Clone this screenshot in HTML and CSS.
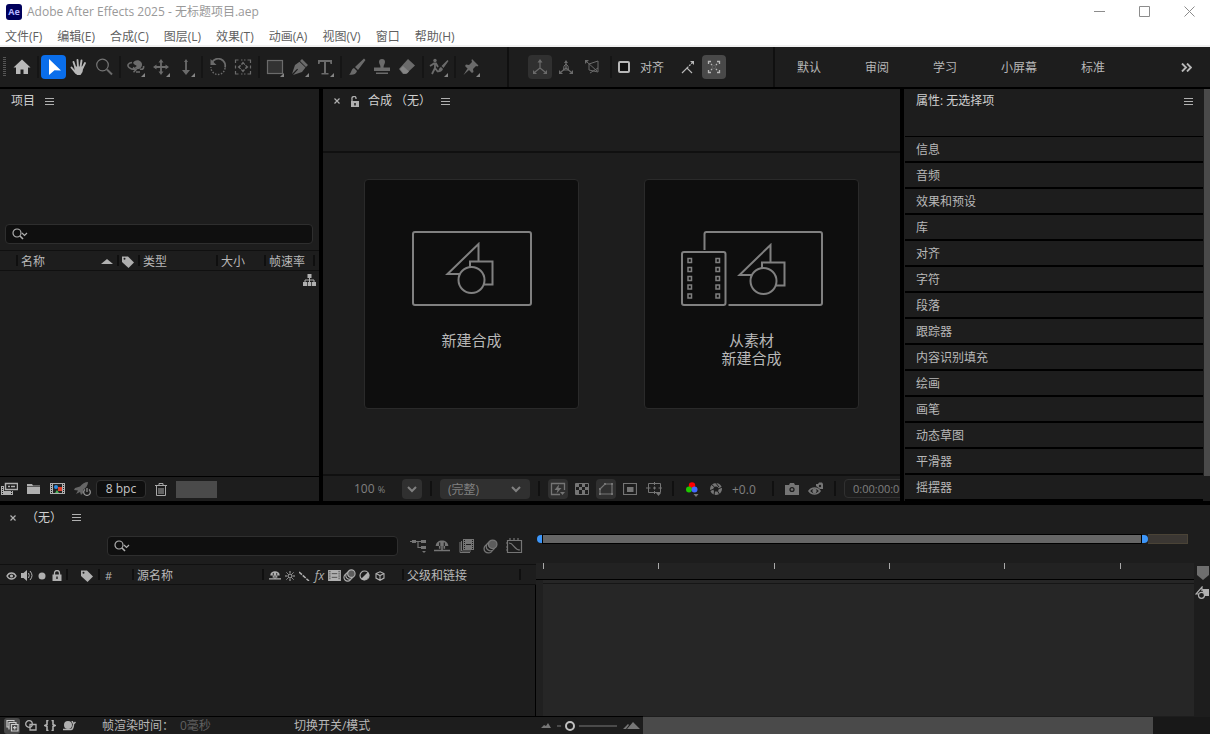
FILE: index.html
```html
<!DOCTYPE html>
<html lang="zh-CN">
<head>
<meta charset="utf-8">
<title>Adobe After Effects 2025 - 无标题项目.aep</title>
<link rel="stylesheet" href="styles.css">
</head>
<body>
<!-- shared icons -->
<svg class="defs" aria-hidden="true">
  <symbol id="i-search" viewBox="0 0 17 12"><g fill="none" stroke="#b0b0b0"><circle cx="5" cy="5" r="4" stroke-width="1.2"/><path d="M8 8l3 3" stroke-width="1.6"/><path d="M10 5l2.500 2.500L15 5" stroke-width="1.200"/></g></symbol>
  <symbol id="i-menu" viewBox="0 0 9 9"><path d="M0 1.500h9M0 4.500h9M0 7.500h9" stroke="#b0b0b0"/></symbol>
  <symbol id="i-tag" viewBox="0 0 12 12"><path d="M0 .5h6l6 6-5.500 5.500L0 6z" fill="#b0b0b0"/><circle cx="2.500" cy="2.800" r="1" fill="#1d1d1d"/></symbol>
  <symbol id="i-down" viewBox="0 0 12 8"><path d="M2 2l4 4 4-4" fill="none" stroke="#808080" stroke-width="2"/></symbol>
  <symbol id="i-shapes" viewBox="0 0 50 52"><g fill="none" stroke="currentColor" stroke-width="2"><path d="M15 32H2.500L33.500 2v17"/><path d="M25 25v-5.500h22.500v23H39"/><circle cx="26.500" cy="38" r="13"/></g></symbol>
  <symbol id="i-film" viewBox="0 0 14 12"><path d="M0 0h14v12H0z" fill="currentColor"/><path d="M2 1v10M12 1v10" stroke="#1d1d1d" stroke-dasharray="1 1"/><path d="M4 4h6M4 8h6" stroke="#1d1d1d" stroke-width=".7"/></symbol>
  <symbol id="i-blur" viewBox="0 0 14 14"><g fill="#1d1d1d" stroke="currentColor" stroke-width="1.200"><circle cx="5" cy="9" r="4"/><circle cx="7" cy="7" r="4"/><circle cx="9" cy="5" r="4" fill="#5c5c5c"/></g></symbol>
  <symbol id="i-shy" viewBox="0 0 14 12"><path d="M1.500 6c0-6.500 11-6.500 11 0z" fill="currentColor"/><path d="M5 3v3M9 3v3" stroke="#1d1d1d"/><path d="M7 2v8M5 6v2.500M9 6v2.500M0 10h14" fill="none" stroke="currentColor" stroke-width="1.400"/></symbol>
</svg>

<header class="titlebar">
  <svg class="app-icon" width="16" height="16" viewBox="0 0 16 16"><rect width="16" height="16" rx="3" fill="#00005b"/><text x="8" y="11" text-anchor="middle" class="app-text">Ae</text></svg>
  <span class="title">Adobe After Effects 2025 - 无标题项目.aep</span>
  <div class="window-buttons">
    <button aria-label="最小化"><svg width="11" height="11"><path d="M0 5.500h11" stroke="#8c8c8c"/></svg></button>
    <button aria-label="最大化"><svg width="11" height="11"><path d="M.5.5h10v10H.5z" stroke="#8c8c8c" fill="none"/></svg></button>
    <button aria-label="关闭"><svg width="11" height="11"><path d="M.5.5l10 10M10.500.5l-10 10" stroke="#8c8c8c"/></svg></button>
  </div>
</header>

<nav class="menubar">
  <a href="#">文件(F)</a><a href="#">编辑(E)</a><a href="#">合成(C)</a><a href="#">图层(L)</a><a href="#">效果(T)</a><a href="#">动画(A)</a><a href="#">视图(V)</a><a href="#">窗口</a><a href="#">帮助(H)</a>
</nav>

<div class="toolbar">
  <div class="tools">
    <span class="grip"></span>
    <button class="tool bright" aria-label="主页"><svg width="18" height="18" viewBox="0 0 18 18"><path d="M9 1.500L.5 9.500H3V16h4.500v-4.500h3V16H15V9.500h2.500z" fill="currentColor"/></svg></button>
    <span class="sep"></span>
    <button class="tool selected" aria-label="选取工具"><svg width="18" height="18" viewBox="0 0 18 18"><path d="M4 1l12 11.500-6.500-.2L4 17z" fill="#fff"/></svg></button>
    <button class="tool bright" aria-label="手形工具"><svg width="18" height="18" viewBox="0 0 18 18"><path d="M6 15L1.500 9.500M5.500 10L3.500 4M8 9L7.500 2M10.500 9L11.500 2.500M12.500 10l2.500-5" fill="none" stroke="currentColor" stroke-width="1.900" stroke-linecap="round"/><path d="M4.500 8.500h9l-1 5.500-2 3H7l-2.500-3z" fill="currentColor"/></svg></button>
    <button class="tool" aria-label="缩放工具"><svg width="18" height="18" viewBox="0 0 18 18"><circle cx="7.500" cy="7" r="5.800" fill="none" stroke="#757575" stroke-width="1.200"/><path d="M12 11.500l5 5" stroke="currentColor" stroke-width="2"/></svg></button>
    <span class="sep"></span>
    <button class="tool more" aria-label="绕光标旋转工具"><svg width="18" height="18" viewBox="0 0 18 18"><path d="M6 5c1-3 6-4 8-1 2 2 1 6-2 7-2 .5-4-.5-4-2 2 0 2-2 0-2z" fill="currentColor"/><path d="M5 4.500C1 5 0 7.500 2 9.500c1.500 1.500 4 2 6 2M13 11c3 1 4-1 3.500-3M6 9.500l3 2.200-2.500 2.500M9 14h4" fill="none" stroke="currentColor" stroke-width="1.600"/></svg></button>
    <button class="tool more" aria-label="平移工具"><svg width="18" height="18" viewBox="0 0 18 18"><path d="M9 4v10M4 9h10" stroke="currentColor" stroke-width="1.800"/><path d="M9 1l2.500 3.500h-5zM9 17l2.500-3.500h-5zM1 9l3.500-2.500v5zM17 9l-3.500-2.500v5z" fill="currentColor"/></svg></button>
    <button class="tool more" aria-label="推拉工具"><svg width="18" height="18" viewBox="0 0 18 18"><path d="M9 3v10" stroke="currentColor" stroke-width="1.800"/><path d="M9 1l2 3H7zM9 17l4-5H5z" fill="currentColor"/></svg></button>
    <span class="sep"></span>
    <button class="tool" aria-label="旋转工具"><svg width="18" height="18" viewBox="0 0 18 18"><path d="M3 4.500a7 7 0 0 1 13 5" fill="none" stroke="currentColor" stroke-width="1.700"/><path d="M1.500 1v6h6z" fill="currentColor"/><path d="M16 10a7 7 0 0 1-14-1" fill="none" stroke="currentColor" stroke-width="1.400" stroke-dasharray="1.500 1.500"/></svg></button>
    <button class="tool" aria-label="锚点工具"><svg width="18" height="18" viewBox="0 0 18 18"><path d="M1.500 5V2h3M13.500 2h3v3M16.500 13v3h-3M4.500 16h-3v-3M7 2h1.500M10 2h1.500M7 16h1.500M10 16h1.500M1.500 7.500v3M16.500 7.500v3" fill="none" stroke="currentColor" stroke-width="1.200"/><circle cx="9" cy="9" r="3" fill="none" stroke="currentColor" stroke-dasharray="2 1"/><path d="M9 3.500l2 2.500H7zM9 14.500L11 12H7zM3.500 9L6 7v4zM14.500 9L12 7v4z" fill="currentColor"/></svg></button>
    <span class="sep"></span>
    <button class="tool more" aria-label="矩形工具"><svg width="18" height="18" viewBox="0 0 18 18"><rect x="1.500" y="2.500" width="15" height="13" fill="#333" stroke="currentColor" stroke-width="1.200"/></svg></button>
    <button class="tool more" aria-label="钢笔工具"><svg width="18" height="18" viewBox="0 0 18 18"><path d="M11 1l6 6-2 2-6-6zM8.500 3.700L14.500 9.500 11 14 2 17l5-5.500-.8-.8L1 16l3-9z" fill="currentColor"/></svg></button>
    <button class="tool more" aria-label="文字工具"><svg width="18" height="18" viewBox="0 0 18 18"><path d="M2 2h14v4h-1.500L14 4h-4v11h2.500v1.500h-7V15H8V4H4l-.5 2H2z" fill="currentColor"/></svg></button>
    <span class="sep"></span>
    <button class="tool" aria-label="画笔工具"><svg width="18" height="18" viewBox="0 0 18 18"><path d="M16 .5L17.500 2 10 12 7 9zM6 10l3 3c-1 4-5 4-8 3.500 2.500-1 2-5.500 5-6.500z" fill="currentColor"/></svg></button>
    <button class="tool" aria-label="仿制图章工具"><svg width="18" height="18" viewBox="0 0 18 18"><path d="M6 4a3 3 0 0 1 6 0c0 2-1.500 3-1.500 5.500H17V13H1V9.500h6.500C7.500 7 6 6 6 4zM3 14.500h12V16H3z" fill="currentColor"/></svg></button>
    <button class="tool" aria-label="橡皮擦工具"><svg width="18" height="18" viewBox="0 0 18 18"><path d="M10 1l7 6.500L8 16H5L1 11z" fill="currentColor"/><path d="M5 8l6 5.500-2 2H5.500L2 11z" fill="#858585"/></svg></button>
    <span class="sep"></span>
    <button class="tool more" aria-label="Roto 笔刷工具"><svg width="20" height="18" viewBox="0 0 20 18"><circle cx="6" cy="2.500" r="1.700" fill="currentColor"/><path d="M1 8l4-2.500h2L9 9M6 5v5l-3 6M6 10l3 4" fill="none" stroke="currentColor" stroke-width="1.800"/><path d="M18.500 2l1 1-5 7-2-2zM12 9l2 2c-1 3-4 3.500-6 3 2-1 1.500-4 4-5z" fill="currentColor"/></svg></button>
    <span class="sep"></span>
    <button class="tool more" aria-label="人偶位置控点工具"><svg width="18" height="18" viewBox="0 0 18 18"><path d="M10 1l6.500 6.500-1.200 1L14 8l-3 3 .5 3-1.500 1-7-7 1-1.500 3 .5 3-3-.5-1.500zM5.500 10.500L7 12l-5.500 5z" fill="currentColor"/></svg></button>
  </div>
  <div class="snapping">
    <button class="box-btn dark" aria-label="本地轴模式"><svg width="16" height="16" viewBox="0 0 16 16"><path d="M8 3v6l-5 4M8 9l5 4" fill="none" stroke="currentColor" stroke-width="1.200"/><path d="M8 0l2.500 3.500h-5zM1 11v4h4zM15 11v4h-4z" fill="currentColor"/></svg></button>
    <button class="box-btn" aria-label="世界轴模式"><svg width="16" height="16" viewBox="0 0 16 16"><path d="M8 3v6l-5 4M8 9l5 4" fill="none" stroke="currentColor" stroke-width="1.200"/><path d="M5.500 11L6 7l2-2 2 2 .5 4z" fill="none" stroke="currentColor"/><path d="M8 1l2 3H6zM1 11v4h4zM15 11v4h-4z" fill="currentColor"/></svg></button>
    <button class="box-btn" aria-label="视图轴模式"><svg width="16" height="16" viewBox="0 0 16 16"><path d="M5 5l9-3v11L5 11zM3 3l10 9M14 9l-8 5" fill="none" stroke="currentColor"/><path d="M1 1h4L1 5z" fill="currentColor"/></svg></button>
    <span class="sep wide"></span>
    <input type="checkbox" id="snap" class="snap-check"><label for="snap">对齐</label>
    <button class="box-btn light" aria-label="对齐边缘"><svg width="16" height="16" viewBox="0 0 16 16"><path d="M2 14l5-5 5 5" fill="none" stroke="currentColor" stroke-width="1.200"/><path d="M7 9l5-5" stroke="currentColor" stroke-width="1.200" stroke-dasharray="2 1"/><path d="M10 2h4v4z" fill="currentColor"/></svg></button>
    <button class="box-btn active" aria-label="对齐特征"><svg width="16" height="16" viewBox="0 0 16 16"><g fill="none" stroke="currentColor" stroke-width="1.300"><path d="M2.500 5V2.500H5M11 2.500h2.500V5M13.500 11v2.500H11M5 13.500H2.500V11"/><path d="M5 5l2 2M11 5L9 7M5 11l2-2M11 11L9 9" stroke-dasharray="1.500 1"/></g></svg></button>
  </div>
  <nav class="workspaces">
    <a href="#">默认</a><a href="#">审阅</a><a href="#">学习</a><a href="#">小屏幕</a><a href="#">标准</a>
    <button class="overflow" aria-label="更多工作区"><svg width="11" height="9" viewBox="0 0 11 9"><path d="M1 .5l4 4-4 4M6 .5l4 4-4 4" fill="none" stroke="#b8b8b8" stroke-width="1.900"/></svg></button>
  </nav>
</div>

<main class="panels">
  <section class="panel project">
    <div class="tab">
      <h2>项目</h2>
      <button aria-label="面板菜单"><svg width="9" height="9"><use href="#i-menu"/></svg></button>
    </div>
    <div class="search project-search">
      <svg width="17" height="12"><use href="#i-search"/></svg>
      <input type="text" aria-label="搜索项目">
    </div>
    <table class="columns">
      <colgroup><col class="c-edge"><col class="c-name"><col class="c-tag"><col class="c-type"><col class="c-size"><col class="c-rate"><col></colgroup>
      <thead><tr>
        <th></th>
        <th><span class="sorted">名称<svg width="12" height="5"><path d="M0 5l6-5 6 5z" fill="#b0b0b0"/></svg></span></th>
        <th><svg width="12" height="12"><use href="#i-tag"/></svg></th>
        <th>类型</th><th>大小</th><th>帧速率</th><th></th>
      </tr></thead>
    </table>
    <div class="project-list">
      <button aria-label="项目流程图"><svg width="13" height="12" viewBox="0 0 13 12"><path d="M4.500 0h4v4h-4zM0 8h4v4H0zM4.700 8h3.600v4H4.700zM9 8h4v4H9z" fill="#b0b0b0"/><path d="M6.500 4v4M2 8V6h9v2" fill="none" stroke="#b0b0b0"/></svg></button>
    </div>
    <div class="project-footer">
      <button aria-label="解释素材"><svg width="18" height="14" viewBox="0 0 18 14"><path d="M5.500 1.500h12v6h-12z" fill="none" stroke="#b0b0b0" stroke-width="1.500"/><path d="M8 4.500h2M11 4.500h4" stroke="#b0b0b0" stroke-width="1.500"/><path d="M1 4h3v5h9v4H1z" fill="#b0b0b0"/><path d="M2.500 5v7M11.500 9v3" stroke="#1d1d1d" stroke-dasharray="1 1"/></svg></button>
      <button aria-label="新建文件夹"><svg width="14" height="12" viewBox="0 0 14 12"><path d="M0 1h5l1 1.500h7V11H0z" fill="#b0b0b0"/><path d="M0 3.500h13" stroke="#1d1d1d" stroke-width=".6"/></svg></button>
      <button aria-label="新建合成"><svg width="15" height="12" viewBox="0 0 15 12"><path d="M0 0h15v11H0z" fill="#b0b0b0"/><path d="M1.500 1v10M13.500 1v10" stroke="#1d1d1d" stroke-dasharray="1 1"/><path d="M3 1h9v9H3z" fill="#222"/><circle cx="6" cy="4" r="2" fill="#2f8be0"/><path d="M8 4h4v4H8z" fill="#e0402c"/><path d="M5 10l2-3 2 3z" fill="#4db35c"/></svg></button>
      <button aria-label="项目设置"><svg width="17" height="14" viewBox="0 0 17 14"><path d="M14 0c-3 0-6 2-8 4.500L1 6l-1 2 4 .5L2 12l4-2 1 3 2-2V8c3-2 5-5 5-8z" fill="#666"/><path d="M11 7.500a3.300 3.300 0 1 0 4 0M13 6v4" fill="none" stroke="#999" stroke-width="1.200"/></svg></button>
      <button class="depth">8 bpc</button>
      <button aria-label="删除"><svg width="12" height="13" viewBox="0 0 12 13"><path d="M0 2.500h12M4 2V.5h4V2M1.500 3v9.500h9V3M4 5v6M6 5v6M8 5v6" fill="none" stroke="#a8a8a8"/></svg></button>
      <span class="h-thumb"></span>
    </div>
  </section>

  <section class="panel comp">
    <div class="tab comp-tab">
      <button class="close" aria-label="关闭"><svg width="6" height="6"><path d="M.5.5l5 5M5.500.5l-5 5" stroke="#b0b0b0" stroke-width="1.200"/></svg></button>
      <svg width="10" height="11" viewBox="0 0 10 11"><path d="M1 5h8v6H1z" fill="#b0b0b0"/><path d="M2 5V3a2 2 0 0 1 4-1v1" fill="none" stroke="#b0b0b0" stroke-width="1.300"/><path d="M5 7v2.500" stroke="#1d1d1d" stroke-width="1.500"/></svg>
      <h2>合成 （无）</h2>
      <button aria-label="面板菜单"><svg width="9" height="9"><use href="#i-menu"/></svg></button>
    </div>
    <div class="cards">
      <button class="card">
        <svg width="120" height="76" viewBox="0 0 120 76"><rect x="1" y="1" width="118" height="73" rx="2" fill="none" stroke="#808080" stroke-width="2"/><use href="#i-shapes" x="33" y="11" width="50" height="52"/></svg>
        <span>新建合成</span>
      </button>
      <button class="card">
        <svg width="142" height="76" viewBox="0 0 142 76"><g fill="none" stroke="#808080" stroke-width="2"><path d="M23.500 19V3a2 2 0 0 1 2-2H139a2 2 0 0 1 2 2v69a2 2 0 0 1-2 2H47.500"/><rect x="1" y="21" width="43.500" height="53" rx="2"/></g><g fill="none" stroke="#808080" stroke-width="1.500"><path d="M7 27.500h3.500v4H7zM7 36.500h3.500v4H7zM7 45.500h3.500v4H7zM7 54h3.500v4H7zM7 63h3.500v4H7zM35 27.500h3.500v4H35zM35 36.500h3.500v4H35zM35 45.500h3.500v4H35zM35 54h3.500v4H35zM35 63h3.500v4H35z"/></g><use href="#i-shapes" x="56" y="12" width="50" height="52"/></svg>
        <span>从素材<br>新建合成</span>
      </button>
    </div>
    <div class="viewer-bar">
      <span class="zoom">100 <small>%</small></span>
      <button class="drop" aria-label="放大率"><svg width="12" height="8"><use href="#i-down"/></svg></button>
      <i class="vsep"></i>
      <span class="select-wrap"><select aria-label="分辨率"><option>(完整)</option></select><svg width="12" height="8"><use href="#i-down"/></svg></span>
      <i class="vsep"></i>
      <div class="view-icons">
        <button class="on" aria-label="快速预览"><svg width="16" height="14" viewBox="0 0 16 14"><path d="M10 12.500H1.500v-11h13V8" fill="none" stroke="currentColor" stroke-width="1.300"/><path d="M9 2.500L4.500 8h3l-1 3.500L11.500 6h-3z" fill="currentColor"/><path d="M10 10h5l-2.500 3z" fill="currentColor"/></svg></button>
        <button aria-label="透明网格"><svg width="14" height="12" viewBox="0 0 14 12"><path d="M.5.5h13v11H.5z" fill="none" stroke="currentColor"/><path d="M1 1h3v3H1zM7 1h3v3H7zM4 4h3v3H4zM10 4h3v3h-3zM1 7h3v4H1zM7 7h3v4H7z" fill="currentColor"/></svg></button>
        <button class="on" aria-label="蒙版可见性"><svg width="16" height="14" viewBox="0 0 16 14"><path d="M2 12V7l5-5h7v10z" fill="none" stroke="currentColor" stroke-width="1.200"/><path d="M1 11h2v2H1zM13 11h2v2h-2zM13 1h2v2h-2zM6 1h2v2H6zM1 6h2v2H1z" fill="currentColor"/></svg></button>
        <button aria-label="目标区域"><svg width="14" height="12" viewBox="0 0 14 12"><path d="M.5.5h13v11H.5z" fill="none" stroke="currentColor" stroke-width="1.200"/><path d="M4 4h6.500v5H4z" fill="currentColor"/></svg></button>
        <button aria-label="网格和参考线"><svg width="16" height="14" viewBox="0 0 16 14"><path d="M2.500 1.500h12v9h-12zM8.500 0v3M8.500 9v3M0 6h4.500M12.500 6H16M7 6h3M8.500 4.500v3" fill="none" stroke="currentColor"/><path d="M10 11h5l-2.500 3z" fill="currentColor"/></svg></button>
      </div>
      <i class="vsep"></i>
      <div class="view-icons">
        <button aria-label="通道"><svg width="14" height="16" viewBox="0 0 14 16"><circle cx="7" cy="4.500" r="3.200" fill="#f00"/><circle cx="4" cy="8.500" r="3" fill="#1ec800"/><circle cx="9.500" cy="8.500" r="3" fill="#4169ff"/><path d="M8.500 13h5L11 16z" fill="currentColor"/></svg></button>
        <button aria-label="重置曝光度"><svg width="14" height="14" viewBox="0 0 14 14"><circle cx="7" cy="7" r="4.300" fill="none" stroke="currentColor" stroke-width="3.400"/><path d="M6 0l4 5M13.500 5L9 7M11 13L8.500 9M5 13.500L5.500 9M0 9l5-2M2 2l3.500 3" stroke="#1d1d1d"/></svg></button>
      </div>
      <span class="exposure">+0.0</span>
      <i class="vsep"></i>
      <div class="view-icons">
        <button aria-label="拍摄快照"><svg width="14" height="12" viewBox="0 0 14 12"><path d="M0 2h4l1-2h4l1 2h4v10H0z" fill="currentColor"/><circle cx="7" cy="6.500" r="2.600" fill="#1d1d1d"/><circle cx="7" cy="6.500" r="1.300" fill="currentColor"/></svg></button>
        <button aria-label="显示快照"><svg width="16" height="14" viewBox="0 0 16 14"><path d="M1 9c3-4 8-4 11 0-3 4-8 4-11 0z" fill="none" stroke="currentColor" stroke-width="1.600"/><circle cx="6.500" cy="9" r="2.200" fill="currentColor"/><path d="M8 2h2l1-1.500h3L15 2v5h-3L8 4z" fill="currentColor"/><circle cx="12" cy="4" r="1.200" fill="#1d1d1d"/></svg></button>
      </div>
      <i class="vsep"></i>
      <button class="timecode">0:00:00:00</button>
    </div>
  </section>

  <aside class="panel side">
    <div class="side-scroll">
      <div class="side-head">
        <h2>属性: 无选择项</h2>
        <button aria-label="面板菜单"><svg width="9" height="9"><use href="#i-menu"/></svg></button>
      </div>
      <ul class="side-list">
        <li><a href="#">信息</a></li>
        <li><a href="#">音频</a></li>
        <li><a href="#">效果和预设</a></li>
        <li><a href="#">库</a></li>
        <li><a href="#">对齐</a></li>
        <li><a href="#">字符</a></li>
        <li><a href="#">段落</a></li>
        <li><a href="#">跟踪器</a></li>
        <li><a href="#">内容识别填充</a></li>
        <li><a href="#">绘画</a></li>
        <li><a href="#">画笔</a></li>
        <li><a href="#">动态草图</a></li>
        <li><a href="#">平滑器</a></li>
        <li><a href="#">摇摆器</a></li>
      </ul>
    </div>
    <div class="v-track"><span class="v-thumb"></span></div>
  </aside>
</main>

<section class="timeline">
  <div class="tab time-tab">
    <button class="close" aria-label="关闭"><svg width="6" height="6"><path d="M.5.5l5 5M5.500.5l-5 5" stroke="#b0b0b0" stroke-width="1.200"/></svg></button>
    <h2>（无）</h2>
    <button aria-label="面板菜单"><svg width="9" height="9"><use href="#i-menu"/></svg></button>
  </div>
  <div class="time-body">
    <div class="layers">
      <div class="layer-tools">
        <div class="search">
          <svg width="17" height="12"><use href="#i-search"/></svg>
          <input type="text" aria-label="搜索图层">
        </div>
        <div class="layer-icons">
          <button aria-label="合成微型流程图"><svg width="17" height="14" viewBox="0 0 17 14"><path d="M0 2.500h11M8 2.500v6h4" fill="none" stroke="currentColor" stroke-width="1.200"/><path d="M2 1h4v3H2zM11 1h5v3h-5zM11 7h5v3h-5zM12 12h4l-2 2z" fill="currentColor"/></svg></button>
          <button aria-label="隐藏图层"><svg width="16" height="14"><use href="#i-shy"/></svg></button>
          <button aria-label="帧混合"><svg width="15" height="14" viewBox="0 0 15 14"><path d="M4 0h11v11H4z" fill="currentColor"/><path d="M1 3v10.500h10M2.500 2v10H12" fill="none" stroke="currentColor"/><path d="M5.500 1v9M13.500 1v9" stroke="#1d1d1d" stroke-dasharray="1 1"/><path d="M7 5.500h5" stroke="#1d1d1d"/></svg></button>
          <button aria-label="运动模糊"><svg width="15" height="15"><use href="#i-blur"/></svg></button>
          <button aria-label="图表编辑器"><svg width="17" height="16" viewBox="0 0 17 16"><path d="M1.500 2.500h14v12h-14zM4 0v2M8 0v2M12 0v2M0 5h2M0 9h2M0 12h2M3 5c5 0 5 7 11 7" fill="none" stroke="currentColor" stroke-width="1.200"/></svg></button>
        </div>
      </div>
      <table class="columns">
        <colgroup><col class="l-av"><col class="l-tag"><col class="l-num"><col class="l-source"><col class="l-switch"><col class="l-parent"><col></colgroup>
        <thead><tr>
          <th><span class="switches">
            <svg width="11" height="10" viewBox="0 0 11 10"><path d="M1 5c2-4 7-4 9 0-2 4-7 4-9 0z" fill="none" stroke="#b0b0b0" stroke-width="1.400"/><circle cx="5.500" cy="5" r="1.600" fill="#b0b0b0"/></svg>
            <svg width="12" height="11" viewBox="0 0 12 11"><path d="M0 3h2.500L6 0v11L2.500 8H0z" fill="#b0b0b0"/><path d="M7.500 3q1.500 2.500 0 5M9 1q4 4.500 0 9" fill="none" stroke="#b0b0b0"/></svg>
            <svg width="8" height="8"><circle cx="4" cy="4" r="3.500" fill="#b0b0b0"/></svg>
            <svg width="10" height="11" viewBox="0 0 10 11"><path d="M.5 4.500h9V11h-9z" fill="#b0b0b0"/><path d="M2.500 5V3a2.500 2.500 0 0 1 5 0v2" fill="none" stroke="#b0b0b0" stroke-width="1.300"/><path d="M5 6.500V9" stroke="#1d1d1d" stroke-width="1.400"/></svg>
          </span></th>
          <th class="tag-cell"><svg width="12" height="12"><use href="#i-tag"/></svg></th>
          <th class="num">#</th>
          <th>源名称</th>
          <th><span class="switches">
            <svg width="12" height="11"><use href="#i-shy"/></svg>
            <svg width="10" height="10" viewBox="0 0 10 10"><circle cx="5" cy="5" r="2" fill="none" stroke="#b0b0b0"/><path d="M5 0v2M5 8v2M0 5h2M8 5h2M1.500 1.500l1.200 1.200M7.300 7.300l1.200 1.200M8.500 1.500L7.300 2.700M2.700 7.300L1.500 8.500" stroke="#b0b0b0"/></svg>
            <svg width="11" height="10" viewBox="0 0 11 10"><path d="M0 1l10 9" stroke="#b0b0b0" stroke-width="1.500" stroke-dasharray="4 1"/></svg>
            <em class="fx">fx</em>
            <svg width="13" height="11"><use href="#i-film"/></svg>
            <svg width="13" height="13"><use href="#i-blur"/></svg>
            <svg width="11" height="11" viewBox="0 0 11 11"><circle cx="5.500" cy="5.500" r="4.500" fill="none" stroke="#b0b0b0" stroke-width="1.200"/><path d="M9 2A5 5 0 0 1 2 9z" fill="#b0b0b0"/></svg>
            <svg width="10" height="10" viewBox="0 0 10 10"><path d="M5 .8l4 1.800v4.500L5 9.300 1 7.100V2.600zM1 2.600l4 2 4-2M5 4.600v4.700" fill="none" stroke="#b0b0b0" stroke-width="1.100"/></svg>
          </span></th>
          <th>父级和链接</th>
          <th></th>
        </tr></thead>
      </table>
      <div class="layer-list"></div>
      <div class="layer-footer">
        <div class="pane-toggles">
          <button class="on" aria-label="图层开关窗格"><svg width="13" height="13" viewBox="0 0 13 13"><path d="M8 2.500V1.500H1V8h1.500M3.500 10H3V3.500h7V5" fill="none" stroke="#ccc" stroke-width="1.200"/><path d="M5.500 5.500h6.500V12H5.500zM8.700 7v3.500M7 8.700h3.500" fill="none" stroke="#ccc" stroke-width="1.200"/></svg></button>
          <button aria-label="转换控制窗格"><svg width="12" height="11" viewBox="0 0 12 11"><circle cx="4" cy="4" r="3.300" fill="none" stroke="#b0b0b0" stroke-width="1.300"/><path d="M5 4.500h6V10H5z" fill="none" stroke="#b0b0b0" stroke-width="1.300"/></svg></button>
          <button aria-label="入点出点窗格"><svg width="12" height="11" viewBox="0 0 12 11"><path d="M4.500.5H3v4L1 5.500l2 1v4h1.500M7.500.5H9v4l2 1-2 1v4H7.500" fill="none" stroke="#b0b0b0" stroke-width="1.600"/></svg></button>
          <button aria-label="渲染时间窗格"><svg width="13" height="10" viewBox="0 0 13 10"><circle cx="5" cy="4" r="4" fill="#b0b0b0"/><path d="M0 8.500h8c2 0 2-2 2.500-5M9 0l1.500 3L12.500 1" fill="none" stroke="#b0b0b0" stroke-width="1.500"/></svg></button>
        </div>
        <span class="render">帧渲染时间：</span>
        <span class="render-ms">0毫秒</span>
        <button class="toggle-mode">切换开关/模式</button>
      </div>
    </div>

    <div class="track">
      <div class="track-top">
        <div class="track-main">
          <div class="work-area">
            <span class="handle start"></span><span class="range"></span><span class="handle end"></span><span class="tail"></span>
          </div>
          <div class="navigator"></div>
          <div class="ruler"><i></i><i></i><i></i><i></i><i></i><i></i></div>
          <div class="lanes"></div>
        </div>
        <div class="track-side">
          <button aria-label="合成标记"><svg width="12" height="14"><path d="M0 0h12v9l-6 5-6-5z" fill="#6e6e6e"/></svg></button>
          <button aria-label="合成按钮"><svg width="14" height="13" viewBox="0 0 14 13"><path d="M7 3h7v7H9z" fill="#b0b0b0"/><path d="M4 8H1l6-7v4" fill="none" stroke="#b0b0b0" stroke-width="1.200"/><circle cx="6.500" cy="9.300" r="3" fill="#1d1d1d" stroke="#b0b0b0" stroke-width="1.200"/></svg></button>
        </div>
      </div>
      <div class="track-footer">
        <div class="time-zoom">
          <svg width="10" height="5"><path d="M0 5l3-3 2 1 2-3 3 5z" fill="#777"/></svg>
          <input type="range" min="0" max="100" value="16" aria-label="时间缩放">
          <svg width="17" height="7"><path d="M0 7l5-5 1 1-3 4zM4 7l6-7 7 7z" fill="#777"/></svg>
        </div>
        <div class="h-track"><span></span></div>
      </div>
    </div>
  </div>
</section>
</body>
</html>
```
FILE: styles.css
```css
* {
  box-sizing: border-box;
}

body {
  margin: 0;
  height: 100vh;
  display: flex;
  flex-direction: column;
  overflow: hidden;
  background: #000;
  color: #b8b8b8;
  font-family: "Open Sans", "Noto Sans CJK SC", sans-serif;
  font-size: 12px;
  line-height: 16px;
}

button {
  display: flex;
  align-items: center;
  justify-content: center;
  margin: 0;
  padding: 0;
  border: none;
  background: none;
  color: inherit;
  font: inherit;
  cursor: pointer;
}

a {
  color: inherit;
  text-decoration: none;
}

h2 {
  margin: 0;
  font-size: 12px;
  font-weight: normal;
  color: #d0d0d0;
}

svg {
  display: block;
  flex: none;
}

.defs {
  position: absolute;
  width: 0;
  height: 0;
}

/* title and menu */
.titlebar {
  display: flex;
  align-items: center;
  height: 23px;
  padding: 0 15px 0 6px;
  background: #fff;
  color: #999;
}

.title {
  margin-left: 5px;
}

.app-text {
  font: bold 9px "Open Sans", sans-serif;
  fill: #b4b4ff;
}

.window-buttons {
  display: flex;
  gap: 34px;
  margin-left: auto;
}

.menubar {
  display: flex;
  gap: 15px;
  height: 24px;
  padding: 6px 5px 0;
  background: #fff;
  border-bottom: 2px solid #f0f0f0;
  color: #5f5f5f;
}

/* toolbar */
.toolbar {
  display: flex;
  flex: none;
  height: 40px;
  margin-bottom: 2px;
  background: #1d1d1d;
}

.tools,
.snapping,
.workspaces {
  display: flex;
  align-items: center;
}

.tools {
  padding: 0 24px 0 3px;
}

.grip {
  width: 3px;
  height: 20px;
  margin-right: 3px;
  background: repeating-linear-gradient(#555 0 1px, #1d1d1d 1px 2px);
}

.sep {
  width: 7px;
  height: 22px;
  background: linear-gradient(#151515, #151515) no-repeat center / 2px 100%;
}

.sep.wide {
  width: 10px;
}

.tool {
  position: relative;
  width: 25px;
  height: 24px;
  color: #6b6b6b;
}

.tool.bright {
  color: #b8b8b8;
}

.tool.selected {
  border-radius: 4px;
  background: #0a6eeb;
}

.tool.more::after {
  content: "";
  position: absolute;
  right: 3px;
  bottom: 2px;
  border-left: 4px solid transparent;
  border-bottom: 4px solid #858585;
}

.snapping {
  gap: 2px;
  padding: 0 47px 0 19px;
  border-left: 2px solid #101010;
  border-right: 2px solid #101010;
}

.box-btn {
  width: 24px;
  height: 24px;
  border-radius: 4px;
  color: #6b6b6b;
}

.box-btn.dark {
  background: #303030;
}

.box-btn.light {
  color: #b8b8b8;
}

.box-btn.active {
  background: #494949;
  color: #b8b8b8;
}

.snap-check {
  appearance: none;
  width: 12px;
  height: 12px;
  margin: 0;
  border: 2px solid #b8b8b8;
  border-radius: 2px;
  background: #111;
}

.snapping label {
  margin: 0 10px 0 8px;
}

.snapping label,
.workspaces a {
  padding-top: 2px;
}

.workspaces {
  flex: 1;
  gap: 44px;
  padding: 0 18px 0 22px;
}

.overflow {
  margin-left: auto;
}

/* panels */
.panels {
  display: grid;
  grid-template-columns: minmax(0, 319fr) minmax(0, 577fr) minmax(0, 306fr);
  gap: 4px;
  flex: 412;
  min-height: 0;
}

.panel {
  display: flex;
  flex-direction: column;
  min-height: 0;
  overflow: hidden;
  background: #1d1d1d;
}

.tab {
  display: flex;
  align-items: center;
  gap: 10px;
  height: 24px;
  padding: 0 11px;
}

.search {
  display: flex;
  align-items: center;
  height: 20px;
  padding: 0 6px;
  border: 1px solid #2e2e2e;
  border-radius: 4px;
  background: #0f0f0f;
}

.search input {
  flex: 1;
  min-width: 0;
  height: 16px;
  padding: 0 4px;
  border: none;
  outline: none;
  background: none;
  color: #d0d0d0;
}

.project-search {
  margin: 111px 6px 6px 5px;
}

.columns {
  width: 100%;
  table-layout: fixed;
  border-collapse: collapse;
  border-top: 1px solid #101010;
  border-bottom: 1px solid #101010;
}

.columns th {
  height: 19px;
  padding: 2px 0 0 5px;
  font-weight: normal;
  line-height: 17px;
  text-align: left;
  white-space: nowrap;
  background: linear-gradient(#0f0f0f, #0f0f0f) no-repeat left center / 2px 11px;
}

.columns th:first-child {
  padding-left: 4px;
  background: none;
}

.c-edge { width: 16px; }
.c-name { width: 101px; }
.c-tag { width: 21px; }
.c-type { width: 78px; }
.c-size { width: 48px; }
.c-rate { width: 49px; }

.sorted {
  display: flex;
  align-items: center;
  justify-content: space-between;
  padding-right: 4px;
}

.project-list {
  display: flex;
  flex: 1;
  align-items: flex-start;
  justify-content: flex-end;
  padding: 3px 3px 0 0;
}

.project-footer {
  display: flex;
  align-items: center;
  gap: 9px;
  height: 25px;
  border-top: 1px solid #000;
}

.depth {
  width: 50px;
  height: 18px;
  margin-left: -4px;
  border: 1px solid #303030;
  border-radius: 4px;
  background: #0f0f0f;
  color: #c8c8c8;
}

.h-thumb {
  width: 41px;
  height: 17px;
  background: #4a4a4a;
}

/* composition */
.comp-tab {
  height: 64px;
  padding-bottom: 38px;
  border-bottom: 2px solid #101010;
}

.comp-tab h2 {
  margin-left: -2px;
}

.cards {
  display: flex;
  flex: 1;
  align-items: flex-start;
  justify-content: center;
  gap: 65px;
  padding-top: 26px;
}

.card {
  flex-direction: column;
  justify-content: flex-start;
  gap: 24px;
  width: 215px;
  height: 230px;
  padding-top: 51px;
  border: 1px solid #2a2a2a;
  border-radius: 4px;
  background: #0e0e0e;
  color: #b8b8b8;
  font-size: 15px;
  line-height: 18px;
}

.card svg {
  color: #808080;
}

.viewer-bar {
  display: flex;
  align-items: center;
  height: 27px;
  padding-left: 31px;
  border-top: 2px solid #101010;
  color: #808080;
  white-space: nowrap;
}

.viewer-bar > * {
  flex: none;
}

.zoom {
  width: 48px;
  padding-top: 2px;
}

.zoom small {
  font-size: 9px;
}

.drop {
  width: 20px;
  height: 20px;
  border-radius: 4px;
  background: #303030;
}

.vsep {
  width: 2px;
  height: 15px;
  margin: 0 8px;
  background: #101010;
}

.select-wrap {
  display: flex;
  align-items: center;
  width: 90px;
  height: 20px;
  padding-right: 8px;
  border-radius: 4px;
  background: #303030;
}

.select-wrap select {
  appearance: none;
  flex: 1;
  min-width: 0;
  padding: 2px 8px 0;
  border: none;
  background: none;
  color: #808080;
  font: inherit;
}

.view-icons {
  display: flex;
  gap: 4px;
}

.view-icons button {
  width: 20px;
  height: 20px;
  border-radius: 4px;
  color: #757575;
}

.view-icons .on {
  background: #303030;
}

.exposure {
  width: 38px;
  padding: 2px 0 0 6px;
}

.timecode {
  height: 19px;
  padding: 1px 8px 0;
  border: 1px solid #303030;
  border-radius: 4px;
  font-size: 11px;
}

/* right hand panel list */
.side {
  flex-direction: row;
}

.side-scroll {
  flex: 1;
  padding-left: 1px;
  overflow: hidden;
}

.side-head {
  display: flex;
  align-items: center;
  justify-content: space-between;
  height: 48px;
  padding: 0 10px 23px 11px;
  border-bottom: 1px solid #000;
}

.side-list {
  margin: 0;
  padding: 0;
  list-style: none;
}

.side-list li {
  height: 26px;
  padding: 5px 11px 0;
  border-bottom: 2px solid #000;
}

.v-track {
  width: 7px;
  padding-left: 1px;
}

.v-thumb {
  display: block;
  height: 94%;
  background: #4a4a4a;
}

/* timeline */
.timeline {
  display: flex;
  flex: 229;
  flex-direction: column;
  min-height: 0;
  margin-top: 4px;
  background: #1d1d1d;
}

.time-tab {
  flex: none;
  height: 25px;
  padding-left: 10px;
}

.time-body {
  display: grid;
  grid-template-columns: minmax(0, 536fr) minmax(0, 674fr);
  flex: 1;
  min-height: 0;
}

.layers,
.track {
  display: flex;
  flex-direction: column;
  min-height: 0;
}

.layer-tools {
  display: flex;
  align-items: center;
  height: 34px;
  padding: 0 12px 2px 20%;
}

.layer-tools .search {
  flex: 1;
}

.layer-icons {
  display: flex;
  gap: 4px;
  margin-left: 10px;
  color: #757575;
}

.layer-icons button {
  width: 20px;
  height: 20px;
}

.l-av { width: 66px; }
.l-tag { width: 32px; }
.l-num { width: 34px; }
.l-source { width: 130px; }
.l-switch { width: 140px; }
.l-parent { width: 117px; }

.switches {
  display: grid;
  grid-auto-flow: column;
  grid-auto-columns: 15px;
  justify-content: start;
  align-items: center;
  justify-items: center;
  color: #b0b0b0;
}

.columns .tag-cell {
  padding-left: 15px;
}

.columns .num {
  padding-left: 7px;
  font-size: 11px;
}

.fx {
  font-size: 12px;
  line-height: 14px;
}

.layer-list {
  flex: 1;
  border-right: 1px solid #000;
}

.layer-footer {
  display: flex;
  align-items: center;
  height: 18px;
  padding-left: 4px;
  border-top: 1px solid #000;
}

.pane-toggles {
  display: flex;
  gap: 3px;
  width: 98px;
}

.pane-toggles button {
  width: 16px;
  height: 16px;
  border-radius: 3px;
}

.pane-toggles .on {
  background: #494949;
}

.render {
  width: 78px;
}

.render-ms {
  color: #606060;
}

.toggle-mode {
  margin: 0 auto 0 83px;
}

.track-top {
  display: flex;
  flex: 1;
  min-height: 0;
}

.track-main {
  display: flex;
  flex: 1;
  flex-direction: column;
}

.work-area {
  display: flex;
  height: 10px;
  margin: 4px 6px 0 1px;
}

.handle {
  width: 6px;
  margin: 1px 0;
  background: #3c96fa;
}

.handle.start {
  width: 5px;
  border-radius: 5px 0 0 5px;
}

.handle.end {
  border-radius: 0 5px 5px 0;
}

.range {
  flex: 601;
  border: 1px solid #000;
  background: #666;
}

.tail {
  flex: 39;
  border: 1px solid #4a4336;
  border-left: none;
  background: #3b3733;
}

.navigator {
  height: 19px;
}

.ruler {
  display: grid;
  grid-template-columns: repeat(5, 115fr) 68fr;
  height: 17px;
  padding: 0 6px 0 7px;
  border-bottom: 1px solid #000;
  background: #222;
}

.ruler i {
  height: 6px;
  border-left: 1px solid #aaa;
}

.lanes {
  flex: 1;
  border-left: 7px solid #202020;
  background: linear-gradient(#161616, #161616) no-repeat 0 3px / 100% 1px #262626;
}

.track-side {
  display: flex;
  flex-direction: column;
  gap: 6px;
  width: 16px;
  padding-top: 36px;
}

.track-side button:first-child {
  padding-left: 2px;
}

.track-footer {
  display: flex;
  height: 18px;
}

.time-zoom {
  display: flex;
  align-items: center;
  gap: 6px;
  width: 107px;
  padding-left: 5px;
  border-top: 1px solid #000;
}

.time-zoom input {
  appearance: none;
  width: 60px;
  height: 12px;
  margin: 0;
  background: linear-gradient(#4a4a4a, #4a4a4a) no-repeat center / 100% 2px;
}

.time-zoom input::-webkit-slider-thumb {
  appearance: none;
  width: 10px;
  height: 10px;
  border: 2px solid #c0c0c0;
  border-radius: 50%;
  background: #1d1d1d;
  box-shadow: 0 0 0 4px #1d1d1d;
}

.h-track {
  flex: 1;
  margin-top: 1px;
  background: #181818;
}

.h-track span {
  display: block;
  width: 90%;
  height: 100%;
  background: #4a4a4a;
}
```
